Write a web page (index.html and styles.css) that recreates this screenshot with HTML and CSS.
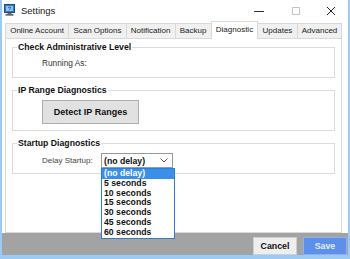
FILE: index.html
```html
<!DOCTYPE html>
<html lang="en">
<head>
    <meta charset="UTF-8">
    <meta name="viewport" content="width=device-width, initial-scale=1.0">
    <title>Settings</title>
    <link rel="stylesheet" href="styles.css">
</head>
<body>
    <div class="window">
        <div class="titlebar">
            <svg class="app-icon" width="11" height="12" viewBox="0 0 11 12">
                <rect x="0.5" y="0.5" width="10" height="8" fill="#2f7ac6" stroke="#1b4f86"/>
                <rect x="2" y="2" width="7" height="5" fill="#8fc3ef"/>
                <path d="M4.2 3.6 Q5.5 2.4 6.6 3.4 Q6.8 4.4 5.6 4.9 L5.6 5.6" fill="none" stroke="#1b4f86" stroke-width="0.9"/>
                <rect x="3.5" y="9" width="4" height="1.2" fill="#6b6b6b"/>
                <rect x="1.5" y="10.2" width="8" height="1.4" fill="#4a4a4a"/>
            </svg>
            <span class="title">Settings</span>
            <div class="caption-buttons">
                <span class="cap cap-min">
                    <svg width="10" height="10" viewBox="0 0 10 10"><path d="M0 5.5 H10" stroke="#333" stroke-width="1"/></svg>
                </span>
                <span class="cap cap-max">
                    <svg width="10" height="10" viewBox="0 0 10 10"><rect x="1.5" y="1.5" width="7" height="7" fill="none" stroke="#c4c4c4" stroke-width="1"/></svg>
                </span>
                <span class="cap cap-close">
                    <svg width="10" height="10" viewBox="0 0 10 10"><path d="M1 1 L9 9 M9 1 L1 9" stroke="#222" stroke-width="1"/></svg>
                </span>
            </div>
        </div>

        <div class="tabs">
            <div class="tab">Online Account</div>
            <div class="tab">Scan Options</div>
            <div class="tab">Notification</div>
            <div class="tab">Backup</div>
            <div class="tab active">Diagnostic</div>
            <div class="tab">Updates</div>
            <div class="tab">Advanced</div>
        </div>

        <div class="panel">
            <fieldset class="group group-admin">
                <legend>Check Administrative Level</legend>
                <div class="row">Running As:</div>
            </fieldset>

            <fieldset class="group group-ip">
                <legend>IP Range Diagnostics</legend>
                <div class="row">
                    <button class="detect-button">Detect IP Ranges</button>
                </div>
            </fieldset>

            <fieldset class="group group-startup">
                <legend>Startup Diagnostics</legend>
                <div class="row">
                    <span class="label">Delay Startup:</span>
                    <div class="combo">
                        <div class="combo-box">
                            <span>(no delay)</span>
                            <svg width="8" height="5" viewBox="0 0 8 5"><path d="M0.5 0.5 L4 4 L7.5 0.5" fill="none" stroke="#555" stroke-width="1"/></svg>
                        </div>
                        <ul class="combo-list">
                            <li class="selected">(no delay)</li>
                            <li>5 seconds</li>
                            <li>10 seconds</li>
                            <li>15 seconds</li>
                            <li>30 seconds</li>
                            <li>45 seconds</li>
                            <li>60 seconds</li>
                        </ul>
                    </div>
                </div>
            </fieldset>
        </div>

        <div class="footer">
            <button class="btn">Cancel</button>
            <button class="btn btn-save">Save</button>
        </div>
    </div>
</body>
</html>
```

FILE: styles.css
```css
body {
    margin: 0;
    padding: 0;
    background-color: #ffffff;
    font-family: "Liberation Sans", Arial, sans-serif;
    color: #111;
}
.window {
    width: 350px;
    height: 259px;
    box-sizing: border-box;
    border-left: 2px solid #9ccaf2;
    border-right: 2px solid #9ccaf2;
    border-bottom: 4px solid #9ccaf2;
    display: flex;
    flex-direction: column;
    background-color: #ffffff;
}
.titlebar {
    height: 21px;
    display: flex;
    align-items: center;
    flex-shrink: 0;
}
.app-icon {
    margin-left: 2px;
    margin-top: -1px;
}
.title {
    margin-left: 6px;
    font-size: 9.5px;
    color: #222;
}
.caption-buttons {
    margin-left: auto;
    display: flex;
    height: 100%;
}
.cap {
    display: flex;
    align-items: center;
    justify-content: center;
    height: 100%;
}
.cap-min {
    width: 38px;
}
.cap-max {
    width: 36px;
}
.cap-close {
    width: 34px;
}
.tabs {
    height: 17px;
    display: flex;
    align-items: flex-end;
    padding-left: 3px;
    flex-shrink: 0;
}
.tab {
    height: 15px;
    box-sizing: border-box;
    padding: 0 4.2px;
    line-height: 14px;
    font-size: 8px;
    color: #222;
    background-color: #f0f0f0;
    border: 1px solid #d9d9d9;
    border-bottom: none;
    margin-right: -1px;
    white-space: nowrap;
}
.tab.active {
    height: 18px;
    margin-bottom: -1px;
    background-color: #ffffff;
    position: relative;
    line-height: 15px;
}
.panel {
    flex: 1;
    margin: 0 6px 0 3px;
    border: 1px solid #d9d9d9;
    background-color: #ffffff;
    padding: 3px 6px 0 6px;
}
.group {
    margin: 0;
    padding: 0 0 0 4px;
    border: 1px solid #dcdcdc;
    min-width: 0;
}
.group legend {
    padding: 0 1px;
    font-size: 8.7px;
    line-height: 10px;
    font-weight: bold;
    color: #111;
}
.group + .group {
    margin-top: 7px;
}
.row {
    display: flex;
    align-items: center;
    margin-left: 25px;
    font-size: 8.3px;
    color: #333;
}
.group-admin .row {
    height: 10px;
    margin-top: 6px;
    margin-bottom: 9px;
}
.group-ip .row {
    margin-top: 5px;
    margin-bottom: 6px;
}
.group-startup .row {
    margin-top: 5px;
    margin-bottom: 5px;
}
.detect-button {
    width: 97px;
    height: 24px;
    background-color: #e1e1e1;
    border: 1px solid #adadad;
    font-family: "Liberation Sans", Arial, sans-serif;
    font-size: 9px;
    font-weight: bold;
    color: #111;
    padding: 0;
}
.label {
    width: 59px;
    color: #444;
    font-size: 8px;
}
.combo {
    position: relative;
}
.combo-box {
    width: 72px;
    height: 15px;
    box-sizing: border-box;
    border: 1px solid #9a9a9a;
    background-color: #ffffff;
    display: flex;
    align-items: center;
    justify-content: space-between;
    padding: 0 4px 0 2px;
    font-size: 8.7px;
    font-weight: bold;
    color: #111;
}
.combo-list {
    position: absolute;
    top: 15px;
    left: 0;
    width: 74px;
    box-sizing: border-box;
    margin: 0;
    padding: 0;
    list-style: none;
    border: 1px solid #2b7fd6;
    background-color: #ffffff;
    z-index: 2;
}
.combo-list li {
    height: 9.8px;
    line-height: 9.8px;
    padding-left: 2px;
    font-size: 8.7px;
    font-weight: bold;
    color: #111;
}
.combo-list li.selected {
    background-color: #3b8fe8;
    color: #ffffff;
}
.footer {
    height: 22px;
    flex-shrink: 0;
    background-color: #a3a3a3;
    display: flex;
    justify-content: flex-end;
    align-items: flex-end;
    padding-right: 1px;
    gap: 6px;
}
.btn {
    width: 44px;
    height: 18px;
    padding: 0;
    border: 1px solid #cfcfcf;
    background-color: #eeeeee;
    font-family: "Liberation Sans", Arial, sans-serif;
    font-size: 8.8px;
    font-weight: bold;
    color: #111;
}
.btn-save {
    background-color: #5e90ea;
    border-color: #8db0f0;
    color: #e3ecfc;
}
```
